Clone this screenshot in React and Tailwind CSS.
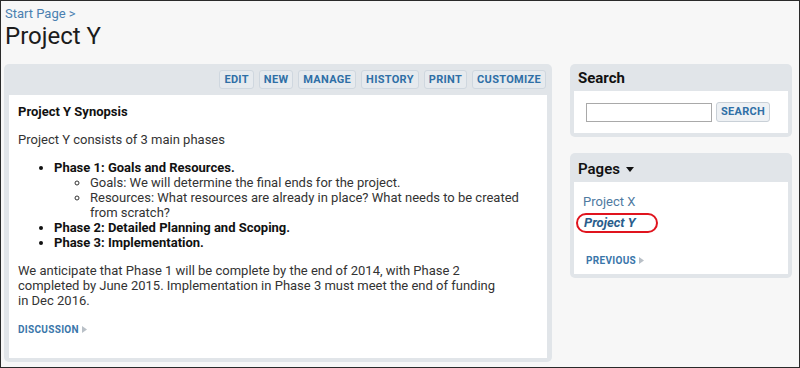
import React from "react";

const Btn = ({ children }) => (
  <span className="h-[19px] px-[4px] flex items-center rounded-[3px] border border-[#cfd7df] bg-[#e6eaee] text-[11px] font-bold tracking-[0.3px] text-[#2f6fa6] leading-none">
    {children}
  </span>
);

const Tri = () => (
  <svg width="5" height="7" viewBox="0 0 5 7" className="ml-[3px] inline-block">
    <path d="M0 0 L5 3.5 L0 7 Z" fill="#b9c0c7" />
  </svg>
);

export default function App() {
  return (
    <div className="w-[800px] h-[368px] bg-[#f7f7f7] border border-[#2a2a2a] overflow-hidden font-['Roboto',sans-serif] text-[#333]">
      <div className="px-[3px] pt-[5px]">
        <div className="pl-[1px] text-[13px] leading-[16px] text-[#4a80b0]">Start Page &gt;</div>
        <div className="pl-[1px] text-[24px] leading-[28px] text-[#1c1c1c]">Project Y</div>
        <div className="mt-[14px] flex items-start gap-[18px]">
          {/* Left panel */}
          <div className="w-[548px] h-[298px] rounded-[5px] bg-[#e1e5e9] px-[5px] pt-[6px] pb-[4px] flex flex-col">
            <div className="flex justify-end gap-[5px] pr-[1px]">
              <Btn>EDIT</Btn>
              <Btn>NEW</Btn>
              <Btn>MANAGE</Btn>
              <Btn>HISTORY</Btn>
              <Btn>PRINT</Btn>
              <Btn>CUSTOMIZE</Btn>
            </div>
            <div className="mt-[6px] flex-1 bg-white px-[9px] pt-[9px] text-[13px] leading-[15px] text-[#333]">
              <div className="font-bold text-[#111]">Project Y Synopsis</div>
              <div className="mt-[13px]">Project Y consists of 3 main phases</div>
              <ul className="mt-[13px] list-disc pl-[36px]">
                <li className="font-bold text-[#111]">
                  Phase 1: Goals and Resources.
                  <ul className="list-[circle] pl-[36px] font-normal text-[#333]">
                    <li>Goals: We will determine the final ends for the project.</li>
                    <li>
                      Resources: What resources are already in place? What needs to be created
                      <br />
                      from scratch?
                    </li>
                  </ul>
                </li>
                <li className="font-bold text-[#111]">Phase 2: Detailed Planning and Scoping.</li>
                <li className="font-bold text-[#111]">Phase 3: Implementation.</li>
              </ul>
              <div className="mt-[13px]">
                We anticipate that Phase 1 will be complete by the end of 2014, with Phase 2
                <br />
                completed by June 2015. Implementation in Phase 3 must meet the end of funding
                <br />
                in Dec 2016.
              </div>
              <div className="mt-[14px] flex items-center text-[10px] font-bold tracking-[0.3px] text-[#3a76aa]">
                DISCUSSION
                <Tri />
              </div>
            </div>
          </div>
          {/* Right column */}
          <div className="w-[222px] flex flex-col gap-[16px]">
            <div className="rounded-[5px] bg-[#e1e5e9] px-[4px] pb-[4px]">
              <div className="h-[27px] flex items-center pl-[4px] pt-[1px] text-[15px] font-bold text-[#111]">Search</div>
              <div className="bg-white h-[42px] pl-[12px] flex items-center gap-[4px]">
                <div className="w-[126px] h-[19px] border border-[#a9a9a9] bg-white" />
                <span className="h-[20px] px-[4px] flex items-center rounded-[3px] border border-[#c9d0d7] bg-[#eef1f4] text-[11px] font-bold tracking-[0.3px] text-[#2f6fa6]">
                  SEARCH
                </span>
              </div>
            </div>
            <div className="rounded-[5px] bg-[#e1e5e9] px-[4px] pb-[4px]">
              <div className="h-[29px] flex items-center pl-[4px] pt-[3px] text-[15px] font-semibold text-[#111]">
                Pages
                <svg width="8" height="5" viewBox="0 0 8 5" className="ml-[6px]">
                  <path d="M0 0 L8 0 L4 5 Z" fill="#111" />
                </svg>
              </div>
              <div className="bg-white h-[92px] pl-[9px] pt-[12px] relative">
                <div className="text-[13px] leading-[16px] text-[#4f7aa1]">Project X</div>
                <div className="mt-[5px] text-[13px] leading-[16px] font-bold italic text-[#2a5d8c] pl-[1px]">Project Y</div>
                <div className="absolute left-[2px] top-[31px] w-[82px] h-[20px] rounded-[10px] border-2 border-[#e0141e]" />
                <div className="mt-[22px] pl-[3px] flex items-center text-[10px] font-bold tracking-[0.3px] text-[#3a76aa]">
                  PREVIOUS
                  <Tri />
                </div>
              </div>
            </div>
          </div>
        </div>
      </div>
    </div>
  );
}
